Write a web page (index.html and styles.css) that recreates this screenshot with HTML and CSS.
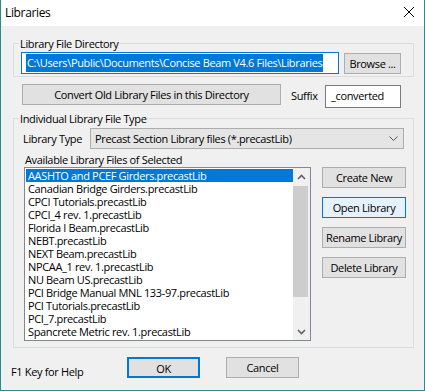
FILE: index.html
```html
<!DOCTYPE html>
<html>
<head>
<meta charset="utf-8">
<link rel="stylesheet" href="styles.css">
</head>
<body>
<div class="window">
  <div class="titlebar">
    <span class="title">Libraries</span>
    <svg class="close" width="12" height="12" viewBox="0 0 12 12"><path d="M1 1 L11 11 M11 1 L1 11" stroke="#000" stroke-width="1" fill="none"/></svg>
  </div>
  <div class="client">
    <fieldset class="group g1">
      <legend>Library File Directory</legend>
      <div class="dir-row">
        <div class="textbox dir"><span class="sel">C:\Users\Public\Documents\Concise Beam V4.6 Files\Libraries</span></div>
        <button class="btn browse">Browse ...</button>
      </div>
    </fieldset>
    <div class="convert-row">
      <button class="btn convert">Convert Old Library Files in this Directory</button>
      <span class="suffix-label">Suffix</span>
      <div class="textbox suffix">_converted</div>
    </div>
    <fieldset class="group g2">
      <legend>Individual Library File Type</legend>
      <div class="type-row">
        <span class="type-label">Library Type</span>
        <div class="combo">
          <span>Precast Section Library files (*.precastLib)</span>
          <svg class="chev" width="9" height="5" viewBox="0 0 9 5"><path d="M0.5 0.5 L4.5 4.5 L8.5 0.5" stroke="#555" stroke-width="1" fill="none"/></svg>
        </div>
      </div>
      <div class="avail-label">Available Library Files of Selected</div>
      <div class="list-row">
        <div class="listbox">
          <ul class="items">
            <li class="selected">AASHTO and PCEF Girders.precastLib</li>
            <li>Canadian Bridge Girders.precastLib</li>
            <li>CPCI Tutorials.precastLib</li>
            <li>CPCI_4 rev. 1.precastLib</li>
            <li>Florida I Beam.precastLib</li>
            <li>NEBT.precastLib</li>
            <li>NEXT Beam.precastLib</li>
            <li>NPCAA_1 rev. 1.precastLib</li>
            <li>NU Beam US.precastLib</li>
            <li>PCI Bridge Manual MNL 133-97.precastLib</li>
            <li>PCI Tutorials.precastLib</li>
            <li>PCI_7.precastLib</li>
            <li>Spancrete Metric rev. 1.precastLib</li>
          </ul>
          <div class="scrollbar">
            <div class="arrow"><svg width="9" height="6" viewBox="0 0 9 6"><path d="M1 5 L4.5 1.5 L8 5" stroke="#606060" stroke-width="1.6" fill="none"/></svg></div>
            <div class="track"><div class="thumb"></div></div>
            <div class="arrow"><svg width="9" height="6" viewBox="0 0 9 6"><path d="M1 1 L4.5 4.5 L8 1" stroke="#606060" stroke-width="1.6" fill="none"/></svg></div>
          </div>
        </div>
        <div class="side-buttons">
          <button class="btn side">Create New</button>
          <button class="btn side focus">Open Library</button>
          <button class="btn side">Rename Library</button>
          <button class="btn side">Delete Library</button>
        </div>
      </div>
    </fieldset>
    <div class="footer">
      <span class="help">F1 Key for Help</span>
      <button class="btn ok">OK</button>
      <button class="btn cancel">Cancel</button>
    </div>
  </div>
</div>
</body>
</html>
```
FILE: styles.css
```css
html, body {
  margin: 0;
  padding: 0;
}
body {
  font-family: "Open Sans", "Noto Sans", sans-serif;
  font-size: 11px;
  letter-spacing: -0.35px;
  color: #000;
  background: #fff;
}
.window {
  width: 425px;
  height: 391px;
  box-sizing: border-box;
  border: 1px solid #2a8b8b;
  border-top: none;
  display: flex;
  flex-direction: column;
}
.titlebar {
  height: 26px;
  background: #fff;
  display: flex;
  align-items: center;
  justify-content: space-between;
  flex: none;
}
.title {
  margin-left: 4px;
  font-size: 12px;
  margin-top: -1px;
}
.close {
  margin-right: 9px;
  margin-top: -2px;
}
.client {
  flex: 1;
  background: #f0f0f0;
  display: flex;
  flex-direction: column;
}
.group {
  margin: 0 10px 0 12px;
  padding: 0;
  border: 1px solid #dcdcdc;
  min-width: 0;
}
.group legend {
  margin-left: 5px;
  padding: 0 1px;
  line-height: 15px;
  height: 15px;
}
.g1 {
  margin-top: 10px;
}
.dir-row {
  display: flex;
  align-items: flex-start;
  padding: 1px 0 2px 7px;
}
.textbox {
  box-sizing: border-box;
  background: #fff;
  border: 1px solid #7a7a7a;
}
.dir {
  width: 318px;
  height: 22px;
  border-color: #0078d7;
  padding: 1px 0 0 4px;
  white-space: nowrap;
  overflow: hidden;
}
.sel {
  display: inline-block;
  background: #0078d7;
  color: #fff;
  line-height: 18px;
  padding: 0 1px;
}
.btn {
  box-sizing: border-box;
  font: inherit;
  letter-spacing: inherit;
  color: #000;
  background: #e1e1e1;
  border: 1px solid #adadad;
  padding: 0;
  margin: 0;
  height: 21px;
  line-height: 19px;
  text-align: center;
}
.browse {
  width: 57px;
  margin-left: 5px;
  margin-top: 1px;
}
.convert-row {
  display: flex;
  align-items: flex-start;
  margin-top: 7px;
  padding-left: 21px;
  height: 24px;
}
.convert {
  width: 259px;
}
.suffix-label {
  margin-left: 10px;
  width: 34px;
  line-height: 20px;
  margin-top: 2px;
}
.suffix {
  width: 76px;
  height: 23px;
  margin-top: 1px;
  border-color: #7a7a7a;
  padding: 0 0 0 5px;
  line-height: 19px;
}
.g2 {
  margin-top: 3px;
}
.type-row {
  display: flex;
  align-items: center;
  margin-top: 2px;
  padding-left: 9px;
  height: 21px;
}
.type-label {
  width: 67px;
  margin-top: -1px;
}
.combo {
  box-sizing: border-box;
  width: 314px;
  height: 21px;
  background: #e5e5e5;
  border: 1px solid #adadad;
  display: flex;
  align-items: center;
  justify-content: space-between;
  padding: 0 5px 0 4px;
}
.avail-label {
  margin: 3px 0 0 11px;
  line-height: 15px;
}
.list-row {
  display: flex;
  align-items: flex-start;
  padding: 0 0 6px 10px;
}
.listbox {
  box-sizing: border-box;
  width: 287px;
  height: 174px;
  border: 1px solid #828790;
  background: #fff;
  display: flex;
}
.items {
  list-style: none;
  margin: 0;
  padding: 1px 0 0 1px;
  flex: 1;
}
.items li {
  height: 13px;
  line-height: 13px;
  padding-left: 2px;
  white-space: nowrap;
  width: 267px;
  box-sizing: border-box;
}
.items li.selected {
  background: #0078d7;
  color: #fff;
}
.scrollbar {
  width: 17px;
  background: #f0f0f0;
  display: flex;
  flex-direction: column;
}
.arrow {
  height: 17px;
  display: flex;
  align-items: center;
  justify-content: center;
  flex: none;
}
.track {
  flex: 1;
  padding: 1px 2px 0 0;
}
.thumb {
  height: 111px;
  background: #cdcdcd;
}
.side-buttons {
  display: flex;
  flex-direction: column;
  gap: 9px;
  margin-left: 11px;
}
.side {
  width: 84px;
}
.focus {
  background: #e5f1fb;
  border-color: #0078d7;
}
.footer {
  display: flex;
  align-items: flex-start;
  margin-top: 9px;
  height: 21px;
}
.help {
  margin-left: 10px;
  width: 116px;
  margin-top: 7px;
  line-height: 15px;
}
.ok {
  width: 73px;
  border: 2px solid #0078d7;
}
.cancel {
  width: 73px;
  margin-left: 26px;
}
```
